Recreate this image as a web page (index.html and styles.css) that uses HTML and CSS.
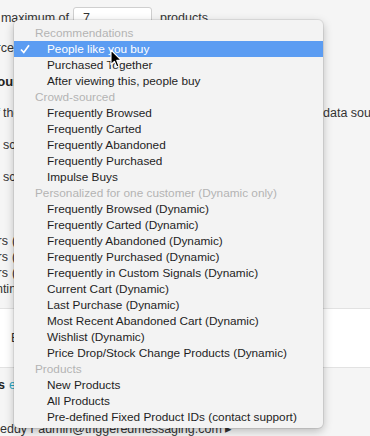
FILE: index.html
```html
<!DOCTYPE html>
<html lang="en">
<head>
  <meta charset="UTF-8" />
  <meta name="viewport" content="width=device-width, initial-scale=1.0"/>
  <title>Recommendation block</title>
  <link rel="stylesheet" href="styles.css">
</head>
<body>
  <div class="page">
    <div class="limit">
      <span class="lead w69">Show a maximum of</span>
      <span class="num">7</span>
      <span>products</span>
    </div>

    <p class="line l-source"><span class="lead w14">Data source</span><span>People like you buy</span></p>
    <h3 class="line l-head"><span class="lead w40">Fallback sources</span></h3>

    <p class="line l-fallback">
      <span class="lead w0">If none of</span>
      <span class="mid">the selected sources return enough products, add from the other</span>
      <span class="tail">data sources</span>
    </p>
    <p class="line l-score"><span class="lead w0">Use</span><span>scoring from the primary source</span></p>
    <p class="line l-score"><span class="lead w0">Use</span><span>scoring from all sources</span></p>

    <div class="filters">
      <p class="line"><span class="lead w8">Exclude items customers</span><span>(already purchased)</span></p>
      <p class="line"><span class="lead w8">Exclude items customers</span><span>(already carted)</span></p>
      <p class="line"><span class="lead w8">Exclude items customers</span><span>(already browsed)</span></p>
      <p class="line"><span class="lead w30">Continue</span><span>with partial results</span></p>
    </div>

    <div class="band">
      <span class="band-text">Edit recommendation block</span>
    </div>

    <p class="line l-alerts"><span class="lead w5"><b>Alerts</b></span><a href="#">edit</a></p>
    <p class="line l-owner"><span class="lead w0">Created by Fr</span><span>eddy r admin@triggeredmessaging.com &#9656;</span></p>
  </div>

  <ul class="menu">
    <li class="group">Recommendations</li>
    <li class="on">
      <svg class="tick" width="10" height="10" viewBox="0 0 10 10"><polyline points="1,5.5 3.8,8.5 9,1.2" fill="none" stroke="#fff" stroke-width="1.7"/></svg>
      People like you buy
    </li>
    <li>Purchased Together</li>
    <li>After viewing this, people buy</li>
    <li class="group">Crowd-sourced</li>
    <li>Frequently Browsed</li>
    <li>Frequently Carted</li>
    <li>Frequently Abandoned</li>
    <li>Frequently Purchased</li>
    <li>Impulse Buys</li>
    <li class="group">Personalized for one customer (Dynamic only)</li>
    <li>Frequently Browsed (Dynamic)</li>
    <li>Frequently Carted (Dynamic)</li>
    <li>Frequently Abandoned (Dynamic)</li>
    <li>Frequently Purchased (Dynamic)</li>
    <li>Frequently in Custom Signals (Dynamic)</li>
    <li>Current Cart (Dynamic)</li>
    <li>Last Purchase (Dynamic)</li>
    <li>Most Recent Abandoned Cart (Dynamic)</li>
    <li>Wishlist (Dynamic)</li>
    <li>Price Drop/Stock Change Products (Dynamic)</li>
    <li class="group">Products</li>
    <li>New Products</li>
    <li>All Products</li>
    <li>Pre-defined Fixed Product IDs (contact support)</li>
  </ul>

  <svg class="cursor" width="13" height="20" viewBox="0 0 13 20">
    <path d="M1 1 L1 15.5 L4.4 12.3 L6.8 18 L9 17 L6.7 11.4 L11.3 11.4 Z" fill="#000" stroke="#fff" stroke-width="1.1" stroke-linejoin="round"/>
  </svg>
</body>
</html>
```

FILE: styles.css
```css
body {
  margin: 0;
  background: #f5f5f5;
  font-family: "Liberation Sans", Arial, sans-serif;
  font-size: 12.5px;
  color: #333;
  overflow: hidden;
}
.page {
  padding-top: 6px;
}
p, h3 {
  margin: 0;
}
.line {
  display: flex;
  gap: 4px;
  height: 16px;
  line-height: 16px;
  white-space: nowrap;
}
.lead {
  display: flex;
  justify-content: flex-end;
  flex: none;
  white-space: nowrap;
}
.w0 { width: 0; }
.w5 { width: 5px; }
.w8 { width: 8px; }
.w14 { width: 14px; }
.w30 { width: 30px; }
.w40 { width: 40px; }
.w69 { width: 69px; }

.limit {
  display: flex;
  align-items: center;
  gap: 4px;
  height: 24px;
  white-space: nowrap;
}
.num {
  width: 79px;
  height: 22px;
  box-sizing: border-box;
  border: 1px solid #cfcfcf;
  border-radius: 3px;
  background: #fff;
  padding-left: 9px;
  line-height: 20px;
  margin-right: 4px;
}
.l-source {
  margin-top: 10px;
}
.l-head {
  margin-top: 18px;
  font-size: 13px;
  font-weight: bold;
  color: #222;
}
.l-fallback {
  margin-top: 15px;
  gap: 3px;
}
.l-fallback .mid {
  flex: none;
  width: 317px;
  overflow: hidden;
}
.l-fallback .tail {
  flex: none;
}
.l-score {
  margin-top: 16px;
  gap: 3px;
}
.filters {
  margin-top: 48px;
}
.band {
  margin-top: 11px;
  height: 58px;
  background: #fff;
  border-top: 1px solid #e2e2e2;
  border-bottom: 1px solid #e2e2e2;
  display: flex;
  align-items: center;
}
.band-text {
  margin-left: 11px;
  color: #333;
}
.l-alerts {
  margin-top: 9px;
}
.l-alerts b {
  color: #222;
}
.l-alerts a {
  color: #2ba6c2;
  text-decoration: none;
}
.l-owner {
  margin-top: 28px;
  gap: 0;
}

.menu {
  position: absolute;
  left: 14px;
  top: 20px;
  width: 309px;
  margin: 0;
  padding: 5px 0 3px;
  list-style: none;
  background: #f3f3f3;
  border-radius: 5px;
  box-shadow: 0 0 0 1px rgba(0,0,0,0.07), 0 3px 10px rgba(0,0,0,0.25);
  font-family: "Liberation Sans", Arial, sans-serif;
  font-size: 11.8px;
  color: #1e1e1e;
}
.menu li {
  position: relative;
  height: 16px;
  line-height: 16px;
  padding-left: 33px;
  white-space: nowrap;
}
.menu .group {
  padding-left: 21px;
  color: #b4b4b4;
}
.menu .on {
  background: #5b9cf2;
  color: #fff;
}
.tick {
  position: absolute;
  left: 6px;
  top: 3px;
}
.cursor {
  position: absolute;
  left: 110px;
  top: 49px;
}
```
